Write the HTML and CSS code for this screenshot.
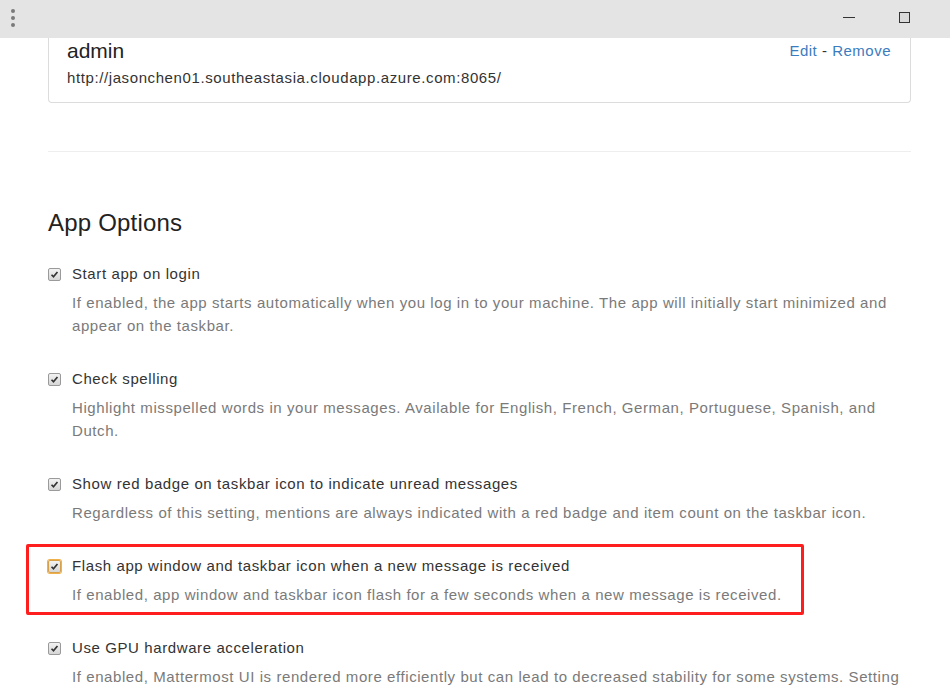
FILE: index.html
```html
<!DOCTYPE html>
<html>
<head>
<meta charset="utf-8">
<link rel="stylesheet" href="styles.css">
</head>
<body>
<div class="titlebar">
  <div class="menu-dots"><span></span><span></span><span></span></div>
  <div class="win-controls">
    <div class="win-btn"><span class="minimize"></span></div>
    <div class="win-btn"><span class="maximize"></span></div>
  </div>
</div>
<div class="content">
  <div class="server-card">
    <div class="server-row">
      <div class="server-name">admin</div>
      <div class="server-actions"><a class="link">Edit</a> - <a class="link">Remove</a></div>
    </div>
    <div class="server-url">http://jasonchen01.southeastasia.cloudapp.azure.com:8065/</div>
  </div>
  <hr class="divider">
  <h2 class="section-title">App Options</h2>
  <div class="options">
    <div class="option">
      <div class="option-label"><span class="cb"><svg viewBox="0 0 13 13"><path d="M3 6.8 L5.3 9.2 L10 3.6" /></svg></span>Start app on login</div>
      <div class="option-help">If enabled, the app starts automatically when you log in to your machine. The app will initially start minimized and appear on the taskbar.</div>
    </div>
    <div class="option">
      <div class="option-label"><span class="cb"><svg viewBox="0 0 13 13"><path d="M3 6.8 L5.3 9.2 L10 3.6" /></svg></span>Check spelling</div>
      <div class="option-help">Highlight misspelled words in your messages. Available for English, French, German, Portuguese, Spanish, and Dutch.</div>
    </div>
    <div class="option">
      <div class="option-label"><span class="cb"><svg viewBox="0 0 13 13"><path d="M3 6.8 L5.3 9.2 L10 3.6" /></svg></span>Show red badge on taskbar icon to indicate unread messages</div>
      <div class="option-help">Regardless of this setting, mentions are always indicated with a red badge and item count on the taskbar icon.</div>
    </div>
    <div class="option highlighted">
      <div class="option-label"><span class="cb focused"><svg viewBox="0 0 13 13"><path d="M3 6.8 L5.3 9.2 L10 3.6" /></svg></span>Flash app window and taskbar icon when a new message is received</div>
      <div class="option-help">If enabled, app window and taskbar icon flash for a few seconds when a new message is received.</div>
    </div>
    <div class="option">
      <div class="option-label"><span class="cb"><svg viewBox="0 0 13 13"><path d="M3 6.8 L5.3 9.2 L10 3.6" /></svg></span>Use GPU hardware acceleration</div>
      <div class="option-help">If enabled, Mattermost UI is rendered more efficiently but can lead to decreased stability for some systems. Setting takes effect after restarting the app.</div>
    </div>
  </div>
</div>
</body>
</html>
```
FILE: styles.css
```css
html, body {
  margin: 0;
  padding: 0;
  height: 691px;
  overflow: hidden;
  background: #fff;
  font-family: "Liberation Sans", Arial, sans-serif;
  color: #333;
}

.titlebar {
  height: 38px;
  background: #e4e4e4;
  display: flex;
  align-items: center;
  justify-content: space-between;
}

.menu-dots {
  display: flex;
  flex-direction: column;
  gap: 3px;
  padding-left: 11px;
  margin-top: -2px;
}
.menu-dots span {
  width: 4px;
  height: 4px;
  border-radius: 50%;
  background: #7a7a7a;
}

.win-controls {
  display: flex;
  height: 100%;
  margin-right: 17px;
}
.win-btn {
  width: 56px;
  display: flex;
  align-items: center;
  justify-content: center;
  margin-top: -4px;
}
.minimize {
  width: 12px;
  height: 1px;
  background: #333;
}
.maximize {
  width: 9px;
  height: 9px;
  border: 1px solid #333;
  background: #dadada;
  margin-left: -1px;
}

.content {
  padding: 0 39px 0 48px;
}

.server-card {
  border: 1px solid #dcdcdc;
  border-top: none;
  border-radius: 0 0 4px 4px;
  padding: 0 19px 14px 18px;
}
.server-row {
  display: flex;
  justify-content: space-between;
  align-items: center;
  height: 26px;
}
.server-name {
  font-size: 21px;
  color: #222;
}
.server-actions {
  font-size: 15px;
  letter-spacing: 0.5px;
  color: #333;
  margin-top: -2px;
}
.link {
  color: #3b7cc0;
}
.server-url {
  font-size: 15px;
  letter-spacing: 0.6px;
  line-height: 20px;
  margin-top: 4px;
  color: #333;
}

.divider {
  border: none;
  border-top: 1px solid #eee;
  margin: 48px 0 0;
}

.section-title {
  font-size: 24px;
  font-weight: normal;
  letter-spacing: 0.2px;
  line-height: 26px;
  margin: 58px 0 0;
  color: #222;
}

.options {
  margin-top: 28px;
}
.option {
  margin-bottom: 32px;
  position: relative;
}
.option-label {
  display: flex;
  align-items: center;
  font-size: 15px;
  letter-spacing: 0.6px;
  line-height: 20px;
  color: #333;
}
.cb {
  width: 11px;
  height: 11px;
  border: 1px solid #9a9a9a;
  border-radius: 2px;
  background: linear-gradient(#f2f2f2, #d6d6d6);
  margin-right: 11px;
  display: flex;
  flex-shrink: 0;
}
.cb svg {
  width: 11px;
  height: 11px;
}
.cb path {
  fill: none;
  stroke: #333;
  stroke-width: 2;
}
.cb.focused {
  box-shadow: 0 0 0 1px #f0b04a;
  border-color: #d9a04a;
}

.option-help {
  font-size: 15px;
  letter-spacing: 0.58px;
  line-height: 23px;
  color: #7a7a7a;
  margin-top: 7px;
  padding-left: 24px;
}

.highlighted::before {
  content: "";
  position: absolute;
  left: -22px;
  top: -12px;
  width: 772px;
  height: 65px;
  border: 3px solid #ff1e1e;
  border-radius: 2px;
}
```
